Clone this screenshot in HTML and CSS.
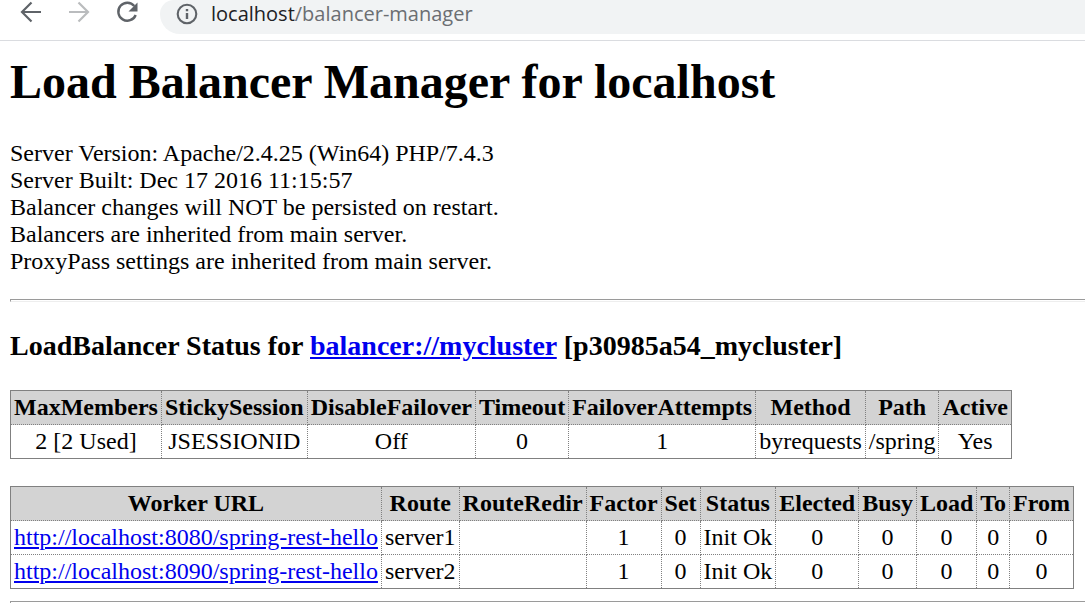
FILE: index.html
```html
<!DOCTYPE html>
<html lang="en">
<head>
<meta charset="utf-8">
<title>Balancer Manager</title>
<link rel="stylesheet" href="styles.css">
</head>
<body>
<header class="toolbar">
  <button class="tool" type="button" aria-label="Back">
    <svg viewBox="0 0 24 24" fill="none" stroke="#5f6368" stroke-width="2.200"><path d="M22 12H3M12.500 2.500 3 12l9.500 9.500"/></svg>
  </button>
  <button class="tool" type="button" aria-label="Forward" disabled>
    <svg viewBox="0 0 24 24" fill="none" stroke="#babcbe" stroke-width="2.200"><path d="M2 12h19M11.500 2.500 21 12l-9.500 9.500"/></svg>
  </button>
  <button class="tool" type="button" aria-label="Reload">
    <svg viewBox="0 0 24 24"><path d="M19.300 6A9 9 0 1 0 20.700 15" fill="none" stroke="#5f6368" stroke-width="2.400"/><path d="M22.500 2.500v9h-9z" fill="#5f6368"/></svg>
  </button>
  <div class="address">
    <svg class="info" viewBox="0 0 22 22"><circle cx="11" cy="11" r="9.300" fill="none" stroke="#5f6368" stroke-width="2.100"/><path d="M9.800 6h2.400v2.300H9.800zM9.800 10h2.400v6H9.800z" fill="#5f6368"/></svg>
    <div class="url" role="textbox" aria-label="Address" tabindex="0">localhost<span class="path">/balancer-manager</span></div>
  </div>
</header>
<main class="page">
  <h1 class="title">Load Balancer Manager for localhost</h1>
  <p class="details">Server Version: Apache/2.4.25 (Win64) PHP/7.4.3<br>
  Server Built: Dec 17 2016 11:15:57<br>
  Balancer changes will NOT be persisted on restart.<br>
  Balancers are inherited from main server.<br>
  ProxyPass settings are inherited from main server.</p>
  <hr class="rule">
  <h3 class="subtitle">LoadBalancer Status for <a href="#mycluster">balancer://mycluster</a> [p30985a54_mycluster]</h3>
  <table class="grid centered" id="mycluster">
    <thead><tr><th>MaxMembers</th><th>StickySession</th><th>DisableFailover</th><th>Timeout</th><th>FailoverAttempts</th><th>Method</th><th>Path</th><th>Active</th></tr></thead>
    <tbody><tr><td>2 [2 Used]</td><td>JSESSIONID</td><td>Off</td><td>0</td><td>1</td><td>byrequests</td><td>/spring</td><td>Yes</td></tr></tbody>
  </table>
  <table class="grid workers">
    <thead><tr><th>Worker URL</th><th>Route</th><th>RouteRedir</th><th>Factor</th><th>Set</th><th>Status</th><th>Elected</th><th>Busy</th><th>Load</th><th>To</th><th>From</th></tr></thead>
    <tbody>
      <tr><td><a href="#server1">http://localhost:8080/spring-rest-hello</a></td><td>server1</td><td></td><td class="num">1</td><td class="num">0</td><td>Init Ok</td><td class="num">0</td><td class="num">0</td><td class="num">0</td><td class="num">0</td><td class="num">0</td></tr>
      <tr><td><a href="#server2">http://localhost:8090/spring-rest-hello</a></td><td>server2</td><td></td><td class="num">1</td><td class="num">0</td><td>Init Ok</td><td class="num">0</td><td class="num">0</td><td class="num">0</td><td class="num">0</td><td class="num">0</td></tr>
    </tbody>
  </table>
  <hr class="rule">
</main>
</body>
</html>
```
FILE: styles.css
```css
body {
  margin: 0;
  background: #fff;
  color: #000;
  font: 24px/27px "Liberation Serif", "Times New Roman", serif;
  overflow: hidden;
}

.toolbar {
  display: flex;
  align-items: flex-start;
  gap: 24px;
  padding: 0 0 6px 19px;
  border-bottom: 1px solid #dadce0;
}

.tool {
  display: block;
  width: 24px;
  height: 24px;
  padding: 0;
  border: 0;
  background: none;
}

.tool svg,
.info {
  display: block;
  width: 100%;
}

.address {
  display: flex;
  flex: 1;
  align-items: center;
  gap: 13px;
  margin-left: -3px;
  padding: 0 0 7px 16px;
  border-bottom-left-radius: 20px;
  border-top-left-radius: 14px;
  background: #f1f3f4;
}

.info {
  width: 22px;
  height: 22px;
}

.url {
  color: #202124;
  font: 20px/27px "Open Sans", "Noto Sans", sans-serif;
  white-space: nowrap;
}

.path {
  color: #6b6e72;
}

.page {
  padding: 14px 0 0 10px;
}

.title {
  margin: 0 0 31px;
  font-size: 48px;
  line-height: 54px;
  white-space: nowrap;
}

.details {
  margin: 0 0 24px;
}

.rule {
  height: 1px;
  margin: 0;
  border: solid #9a9a9a;
  border-width: 1px 0 1px 1px;
  border-bottom-color: #eee;
}

.subtitle {
  margin: 28px 0;
  font-size: 28px;
  line-height: 32px;
  white-space: nowrap;
}

a {
  color: #0000ee;
}

.grid {
  margin: 0 0 27px;
  border: 1px solid #808080;
  border-collapse: collapse;
  white-space: nowrap;
}

.grid th,
.grid td {
  height: 27px;
  padding: 3px;
  border: 1px dotted #808080;
}

.grid th {
  background: #d3d3d3;
}

.centered td,
.num {
  text-align: center;
}

.workers {
  margin-bottom: 12px;
}
```
